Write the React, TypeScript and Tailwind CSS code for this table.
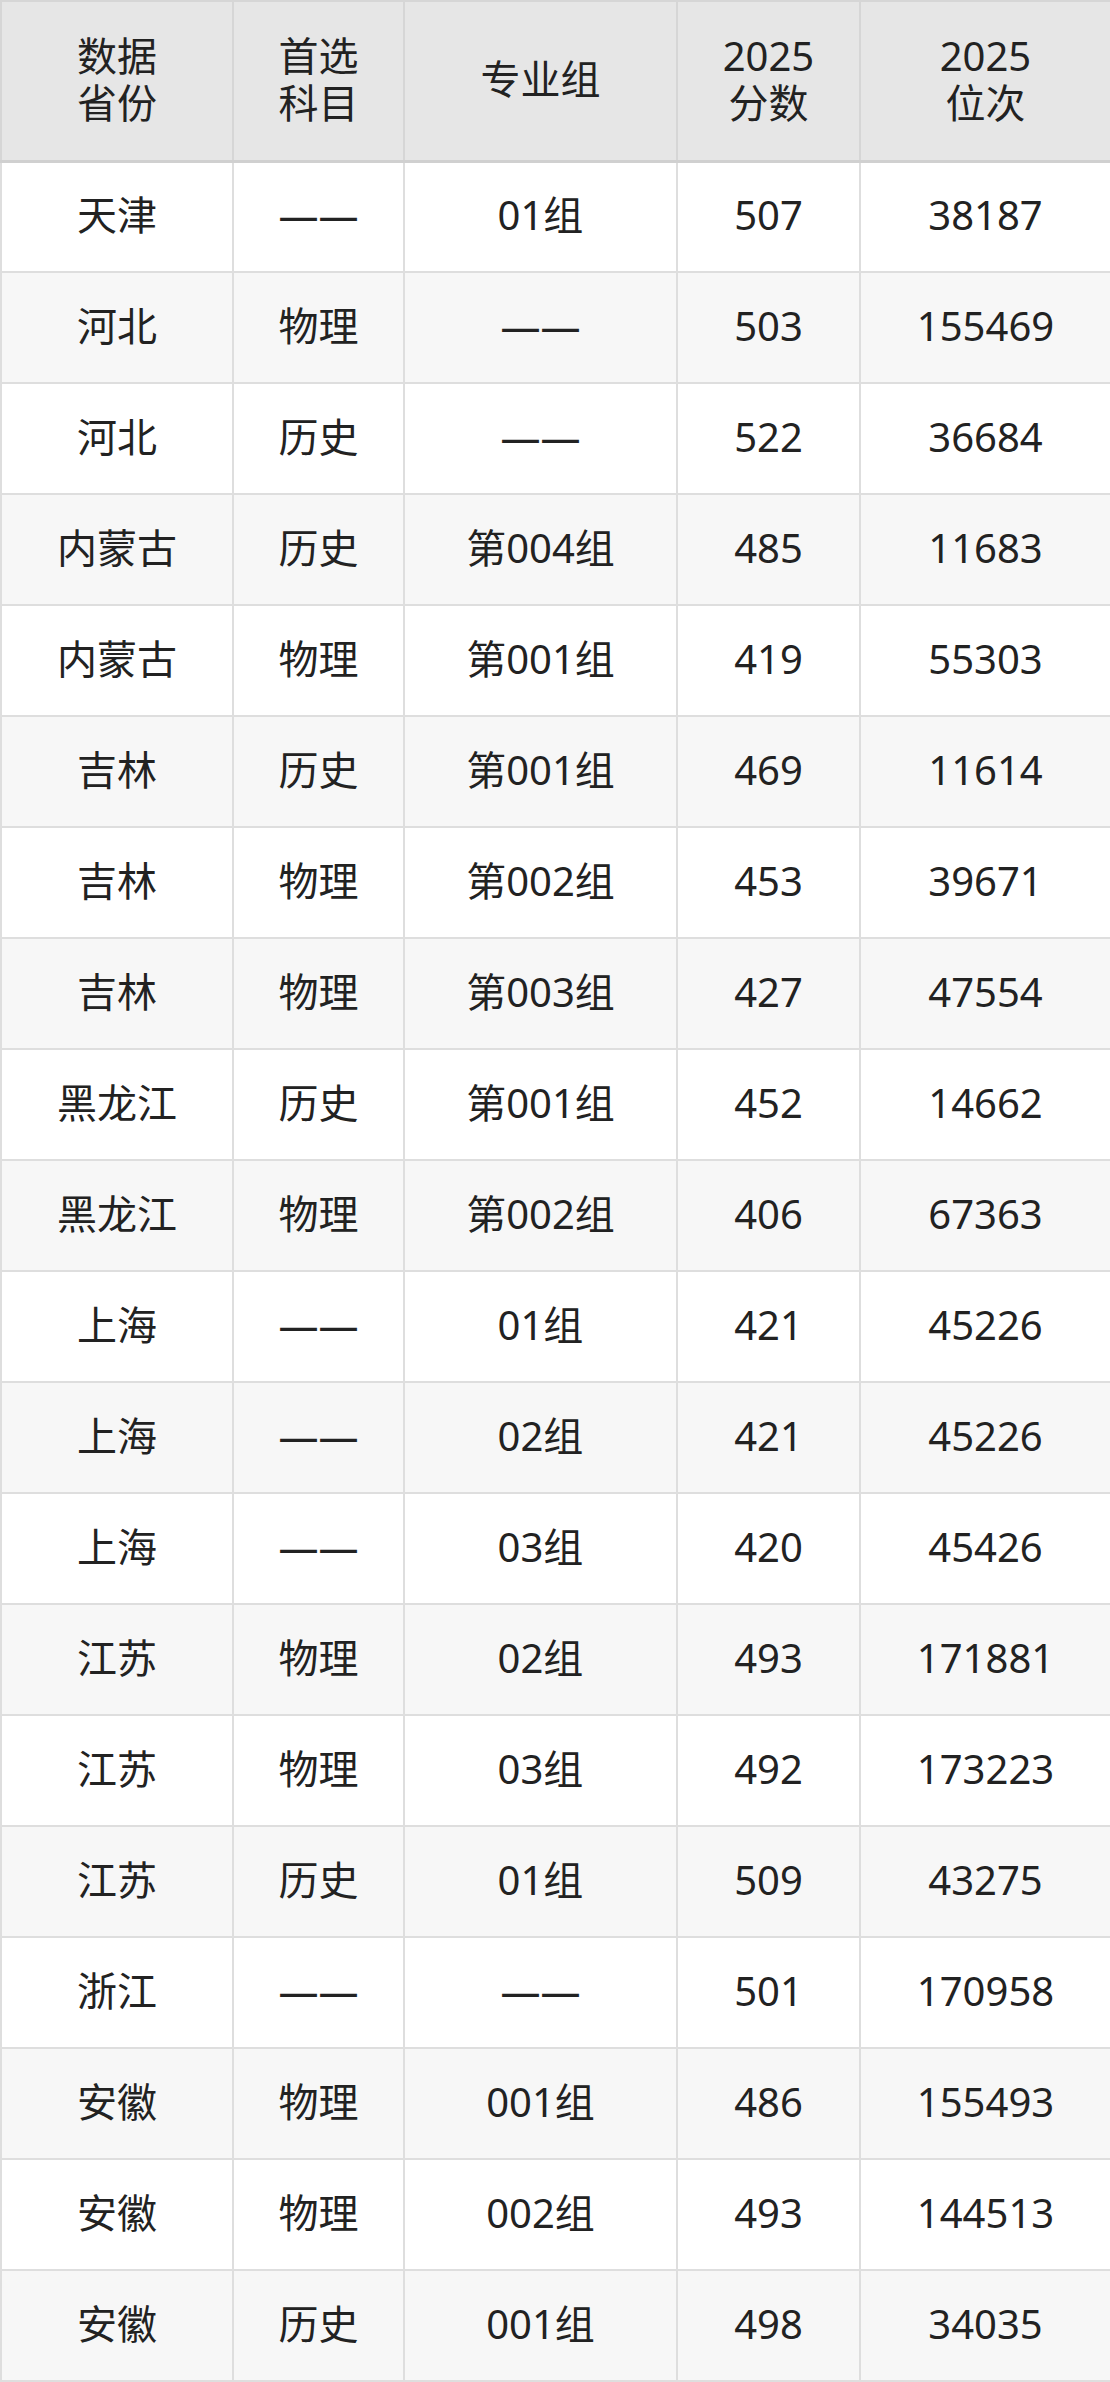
const rows: [string, string, string, string, string][] = [
  ['天津', '——', '01组', '507', '38187'],
  ['河北', '物理', '——', '503', '155469'],
  ['河北', '历史', '——', '522', '36684'],
  ['内蒙古', '历史', '第004组', '485', '11683'],
  ['内蒙古', '物理', '第001组', '419', '55303'],
  ['吉林', '历史', '第001组', '469', '11614'],
  ['吉林', '物理', '第002组', '453', '39671'],
  ['吉林', '物理', '第003组', '427', '47554'],
  ['黑龙江', '历史', '第001组', '452', '14662'],
  ['黑龙江', '物理', '第002组', '406', '67363'],
  ['上海', '——', '01组', '421', '45226'],
  ['上海', '——', '02组', '421', '45226'],
  ['上海', '——', '03组', '420', '45426'],
  ['江苏', '物理', '02组', '493', '171881'],
  ['江苏', '物理', '03组', '492', '173223'],
  ['江苏', '历史', '01组', '509', '43275'],
  ['浙江', '——', '——', '501', '170958'],
  ['安徽', '物理', '001组', '486', '155493'],
  ['安徽', '物理', '002组', '493', '144513'],
  ['安徽', '历史', '001组', '498', '34035'],
];

const headers = [
  ['数据', '省份'],
  ['首选', '科目'],
  ['专业组'],
  ['2025', '分数'],
  ['2025', '位次'],
];

export default function App() {
  return (
    <div className="w-[1110px] bg-white font-['Noto_Sans','Noto_Sans_CJK_SC',sans-serif] text-[#222]">
      <table className="w-[1110px] table-fixed border-collapse border-2 border-[#d6d6d6]">
        <colgroup>
          <col className="w-[232px]" />
          <col className="w-[171px]" />
          <col className="w-[273px]" />
          <col className="w-[183px]" />
          <col className="w-[251px]" />
        </colgroup>
        <thead>
          <tr className="h-[160px] bg-[#e6e6e6]">
            {headers.map((h, i) => (
              <th
                key={i}
                className="border-2 border-b-[3px] border-[#d6d6d6] border-b-[#d0d0d0] p-0 pb-[4px] text-center align-middle text-[40px] font-normal leading-[47px]"
              >
                {h.map((line) => (
                  <div key={line}>{line}</div>
                ))}
              </th>
            ))}
          </tr>
        </thead>
        <tbody>
          {rows.map((r, i) => (
            <tr key={i} className={`h-[111px] ${i % 2 === 1 ? 'bg-[#f7f7f7]' : 'bg-white'}`}>
              {r.map((c, j) => (
                <td
                  key={j}
                  className="border-2 border-[#dedede] p-0 pb-[4px] text-center align-middle text-[40px] leading-none"
                >
                  {c}
                </td>
              ))}
            </tr>
          ))}
        </tbody>
      </table>
    </div>
  );
}
